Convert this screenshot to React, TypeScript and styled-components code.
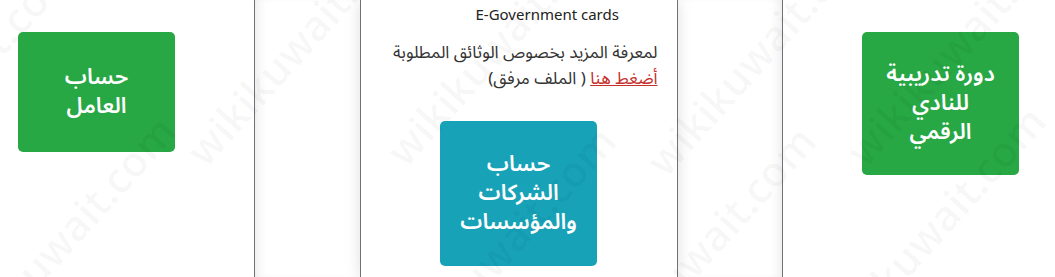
import React from "react";
import styled, { createGlobalStyle } from "styled-components";

const Global = createGlobalStyle`
  html, body { margin: 0; padding: 0; background: #fff; }
  body { font-family: "Noto Sans", "Open Sans", "DejaVu Sans", sans-serif; color: #212529; }
  * { box-sizing: border-box; }
`;

const ARABIC = `"Noto Sans Arabic", "Noto Sans", "DejaVu Sans", sans-serif`;

const Page = styled.div`
  position: relative;
  width: 1055px;
  height: 277px;
  overflow: hidden;
  display: flex;
  background: #fff;
`;

const SideColumn = styled.div<{ $padLeft: number; $width?: number }>`
  flex: ${(p) => (p.$width ? `0 0 ${p.$width}px` : "1 1 auto")};
  display: flex;
  align-items: flex-start;
  padding: 32px 0 0 ${(p) => p.$padLeft}px;
`;

const MiddleColumn = styled.div`
  flex: 0 0 529px;
  display: flex;
  justify-content: center;
  border-left: 1px solid #6f7378;
  border-right: 1px solid #6f7378;
  background: #fff;
  box-shadow: inset 10px 0 14px -10px rgba(0, 0, 0, 0.12),
    inset -10px 0 14px -10px rgba(0, 0, 0, 0.12);
`;

const Card = styled.div`
  width: 318px;
  height: 100%;
  background: #fff;
  border-left: 1px solid #6f7378;
  border-right: 1px solid #6f7378;
  box-shadow: 0 0 14px rgba(0, 0, 0, 0.13);
  display: flex;
  flex-direction: column;
  align-items: center;
  padding: 4px 19px 0 19px;
`;

const Caption = styled.div`
  align-self: stretch;
  font-family: "Noto Sans", "Open Sans", sans-serif;
  font-size: 15px;
  line-height: 20px;
  color: #222;
  padding-left: 96px;
  white-space: nowrap;
`;

const Paragraph = styled.p`
  align-self: stretch;
  direction: rtl;
  text-align: right;
  margin: 16px 0 0 0;
  font-family: ${ARABIC};
  font-size: 17px;
  line-height: 26px;
  color: #333;
  white-space: nowrap;
`;

const Link = styled.a`
  color: #c5302d;
  text-decoration: underline;
`;

const ActionButton = styled.a<{ $tone: "success" | "info"; $height: number }>`
  display: flex;
  align-items: center;
  justify-content: center;
  width: 157px;
  height: ${(p) => p.$height}px;
  flex: 0 0 auto;
  border-radius: 5px;
  background: ${(p) => (p.$tone === "success" ? "#28a745" : "#17a2b8")};
  color: #fff;
  text-decoration: none;
  direction: rtl;
  text-align: center;
  font-family: ${ARABIC};
  font-weight: 600;
  font-size: 22px;
  line-height: 29px;
  padding: 0 8px;
`;

const CardButton = styled(ActionButton)`
  margin-top: 29px;
`;

const Watermarks = styled.div`
  position: absolute;
  inset: 0;
  pointer-events: none;
`;

const Mark = styled.span`
  position: absolute;
  white-space: nowrap;
  font-family: "Open Sans", "Noto Sans", sans-serif;
  font-size: 42px;
  font-weight: 600;
  color: rgba(0, 0, 0, 0.04);
  transform: translate(-50%, -50%) rotate(-48deg);
`;

const marks: Array<[number, number]> = [
  [60, 240],
  [-40, 80],
  [300, 40],
  [500, 250],
  [500, 40],
  [700, 250],
  [760, 50],
  [930, 230],
  [960, 40],
];

export default function App() {
  return (
    <>
      <Global />
      <Page>
        <SideColumn $padLeft={18} $width={254}>
          <ActionButton href="#" $tone="success" $height={120}>
            حساب
            <br />
            العامل
          </ActionButton>
        </SideColumn>
        <MiddleColumn>
          <Card>
            <Caption>E-Government cards</Caption>
            <Paragraph>
              لمعرفة المزيد بخصوص الوثائق المطلوبة
              <br />
              <Link href="#">أضغط هنا</Link> ( الملف مرفق)
            </Paragraph>
            <CardButton href="#" $tone="info" $height={145}>
              حساب
              <br />
              الشركات
              <br />
              والمؤسسات
            </CardButton>
          </Card>
        </MiddleColumn>
        <SideColumn $padLeft={79}>
          <ActionButton href="#" $tone="success" $height={143}>
            دورة تدريبية
            <br />
            للنادي
            <br />
            الرقمي
          </ActionButton>
        </SideColumn>
        <Watermarks>
          {marks.map(([x, y], i) => (
            <Mark key={i} style={{ left: x, top: y }}>
              wikikuwait.com
            </Mark>
          ))}
        </Watermarks>
      </Page>
    </>
  );
}
